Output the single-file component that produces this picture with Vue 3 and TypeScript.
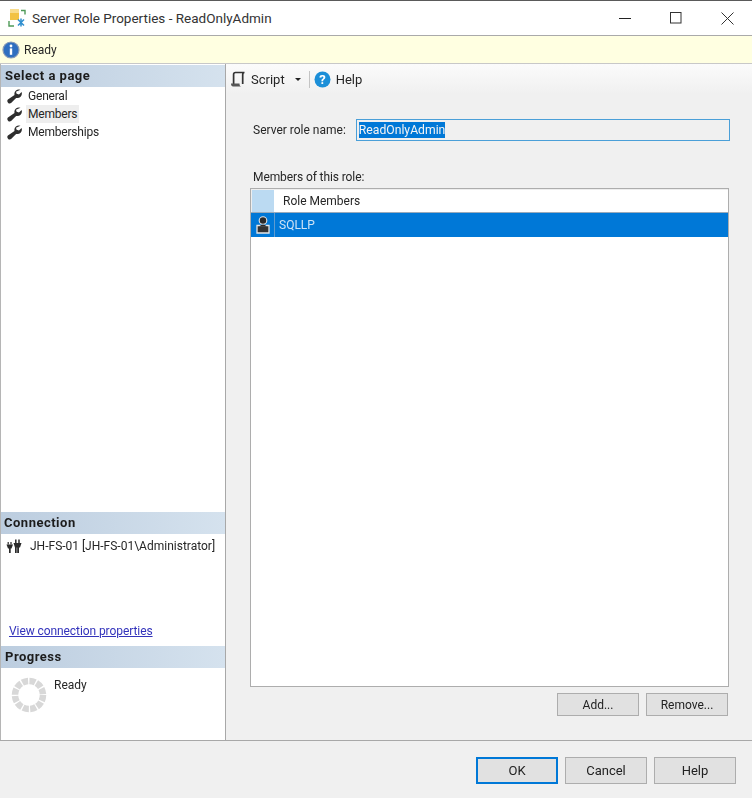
<script setup lang="ts">
const pages: { name: string; active: boolean }[] = [
  { name: 'General', active: false },
  { name: 'Members', active: true },
  { name: 'Memberships', active: false },
]
const wrench =
  'M13.5.8a4.5 4.5 0 0 0-6 5.2L.9 10.6a2.4 2.4 0 0 0 3.2 3.5l5-5.2a4.5 4.5 0 0 0 5.500-5.800l-2.600 2.300-2.400-.6-.6-2z'
</script>

<template>
  <div class="dialog">
    <header class="titlebar">
      <svg class="app-icon" width="20" height="20" viewBox="0 0 20 20">
        <rect x="2" y="1" width="9" height="11" fill="#f2c243" />
        <rect x="2" y="1" width="9" height="4" fill="#f8dc8c" />
        <path d="M1 13v5h5" fill="none" stroke="#4e9a57" stroke-width="1.4" />
        <path d="M13 2.5h4v4" fill="none" stroke="#4e9a57" stroke-width="1.4" />
        <path d="M10 11.5l6 6M16 11.5l-6 6M13 10.5v8" stroke="#2f8fcf" stroke-width="1.5" />
      </svg>
      <span class="title">Server Role Properties - ReadOnlyAdmin</span>
      <div class="window-buttons">
        <svg width="12" height="12" viewBox="0 0 12 12"><path d="M0 6.5h12" stroke="#222" stroke-width="1" /></svg>
        <svg width="12" height="12" viewBox="0 0 12 12"><rect x=".5" y=".5" width="10.5" height="10.5" fill="none" stroke="#333" stroke-width="1" /></svg>
        <svg width="13" height="13" viewBox="0 0 13 13"><path d="M.5.5l12 12M12.5.5l-12 12" stroke="#333" stroke-width="1" /></svg>
      </div>
    </header>

    <div class="status">
      <svg width="18" height="18" viewBox="0 0 18 18">
        <circle cx="9" cy="9" r="8" fill="#2f6fc0" stroke="#8a9bb5" stroke-width="1.2" />
        <circle cx="9" cy="5" r="1.4" fill="#fff" />
        <rect x="7.8" y="7.4" width="2.4" height="6.4" fill="#fff" />
      </svg>
      <span>Ready</span>
    </div>

    <div class="body">
      <aside class="sidebar">
        <section class="pages">
          <h2 class="band">Select a page</h2>
          <ul class="page-list">
            <li v-for="p in pages" :key="p.name" class="page">
              <svg width="15" height="15" viewBox="0 0 15 15"><path :d="wrench" fill="#2e2e2e" /></svg>
              <span :class="{ active: p.active }">{{ p.name }}</span>
            </li>
          </ul>
        </section>

        <section class="connection">
          <h2 class="band conn-band">Connection</h2>
          <div class="conn-row">
            <svg width="16" height="14" viewBox="0 0 16 14">
              <path d="M0.5 5.5h6.5L5.5 9.5H4.7V14H3V9.5H2z" fill="#2b2b2b" />
              <path d="M7.5 4h8L14 8.5h-1V14h-1.8V8.5h-.5V14H9V8.5H9z" fill="#2b2b2b" />
              <path d="M9.8 .5v3.5M13 .5v3.5" stroke="#2b2b2b" stroke-width="1.5" />
              <path d="M2.2 3v2.5M5 3v2.5" stroke="#2b2b2b" stroke-width="1.2" />
            </svg>
            <span>JH-FS-01 [JH-FS-01\Administrator]</span>
          </div>
          <a class="conn-link">View connection properties</a>
        </section>

        <section class="progress">
          <h2 class="band">Progress</h2>
          <div class="progress-row">
            <svg class="spinner" width="36" height="36" viewBox="0 0 36 36">
              <circle cx="18" cy="18" r="14" fill="none" stroke="#d8d8d8" stroke-width="6.5" stroke-dasharray="6 1.33" />
            </svg>
            <span>Ready</span>
          </div>
        </section>
      </aside>

      <main class="content">
        <div class="toolbar">
          <svg class="script-icon" width="16" height="17" viewBox="0 0 16 17">
            <path d="M5.5 1.5h9M5.5 1.5C4 1.5 3.6 2.5 3.6 3.5v9.5M14.500 1.500c-1.300 0-1.800.8-1.800 2.200V13" fill="none" stroke="#333" stroke-width="1.7" />
            <path d="M1 12.500h8.500c0 1.800.6 3 1.800 3H3.200C1.700 15.500 1 14.300 1 12.500z" fill="#555" />
          </svg>
          <span class="tool-label">Script</span>
          <span class="caret"></span>
          <span class="tool-sep"></span>
          <svg class="help-icon" width="17" height="17" viewBox="0 0 17 17">
            <circle cx="8.5" cy="8.5" r="8" fill="#1c8fd8" />
            <text x="8.5" y="13" text-anchor="middle" class="help-q">?</text>
          </svg>
          <span class="tool-label">Help</span>
        </div>

        <div class="form">
          <div class="name-row">
            <label>Server role name:</label>
            <div class="name-box"><span class="selected">ReadOnlyAdmin</span></div>
          </div>

          <div class="members-label">Members of this role:</div>
          <div class="grid">
            <div class="grid-head">
              <div class="corner"></div>
              <div class="head-cell">Role Members</div>
            </div>
            <div class="grid-row">
              <div class="row-icon">
                <svg width="16" height="20" viewBox="0 0 16 20">
                  <path d="M2 10.500h12v7.500H2z" fill="#333" stroke="#e6e6e6" stroke-width="1.300" />
                  <circle cx="8" cy="5.500" r="3.800" fill="#2a2a2a" stroke="#e6e6e6" stroke-width="1.100" />
                  <path d="M4.500 11.500c.8-2.200 6.200-2.200 7 0z" fill="#2a2a2a" />
                </svg>
              </div>
              <div class="row-name">SQLLP</div>
            </div>
          </div>

          <div class="grid-actions">
            <button class="btn small">Add...</button>
            <button class="btn small">Remove...</button>
          </div>
        </div>
      </main>
    </div>

    <footer class="footer">
      <button class="btn large primary">OK</button>
      <button class="btn large">Cancel</button>
      <button class="btn large">Help</button>
    </footer>
  </div>
</template>

<style>
html, body { margin: 0; background: #fff; }
</style>

<style scoped>
.dialog {
  width: 752px;
  height: 798px;
  box-sizing: border-box;
  display: flex;
  flex-direction: column;
  overflow: hidden;
  border-top: 1px solid #5a5a5a;
  font-family: Roboto, "Noto Sans", sans-serif;
  font-size: 12px;
  color: #262626;
  filter: blur(0.4px);
}
.titlebar {
  height: 35px;
  flex: none;
  box-sizing: border-box;
  background: #fff;
  border-bottom: 1px solid #aaa;
  display: flex;
  align-items: center;
  padding-left: 8px;
}
.app-icon { margin-right: 4px; }
.title { font-size: 13.5px; color: #333; }
.window-buttons {
  margin-left: auto;
  display: flex;
  align-items: center;
  gap: 39px;
  padding-right: 18px;
}
.status {
  height: 28px;
  flex: none;
  box-sizing: border-box;
  background: #ffffe1;
  border-bottom: 1px solid #c8c8c8;
  display: flex;
  align-items: center;
  gap: 4px;
  padding-left: 2px;
}
.body { flex: 1; min-height: 0; display: flex; }
.sidebar {
  width: 226px;
  flex: none;
  box-sizing: border-box;
  padding-top: 1px;
  background: #fff;
  border-left: 1px solid #b5b5b5;
  border-right: 1px solid #a8a8a8;
  display: flex;
  flex-direction: column;
}
.band {
  margin: 0;
  height: 22px;
  line-height: 21px;
  padding-left: 4px;
  font-size: 13px;
  letter-spacing: 0.5px;
  font-weight: 700;
  color: #1c1c1c;
  background: linear-gradient(90deg, #bccddf, #d5e2ee);
}
.conn-band { padding-left: 3px; }
.pages { flex: 1; }
.page-list { list-style: none; margin: 0; padding: 0; }
.page {
  height: 18px;
  display: flex;
  align-items: center;
  padding-left: 6px;
  gap: 4px;
}
.page span { padding: 0 2px; line-height: 18px; letter-spacing: -0.2px; }
.page .active { background: #eeeeee; }
.connection { height: 134px; flex: none; display: flex; flex-direction: column; }
.conn-row {
  display: flex;
  align-items: center;
  gap: 8px;
  padding: 2px 0 0 5px;
  height: 20px;
}
.conn-link {
  margin-top: auto;
  margin-bottom: 8px;
  padding-left: 8px;
  letter-spacing: -0.08px;
  color: #3333bb;
  text-decoration: underline;
}
.progress { height: 94px; flex: none; }
.progress-row {
  display: flex;
  align-items: flex-start;
  gap: 7px;
  padding: 9px 0 0 10px;
}
.progress-row span { margin-top: 1px; }
.content { flex: 1; min-width: 0; background: #f0f0f0; display: flex; flex-direction: column; }
.toolbar {
  height: 30px;
  flex: none;
  display: flex;
  align-items: center;
  padding-left: 4px;
  gap: 4px;
  font-size: 13px;
  background: linear-gradient(#fbfbfb, #f0f0f0);
}
.script-icon { margin-right: 1px; }
.help-icon { margin-right: 1px; }
.tool-label { color: #262626; }
.caret {
  margin-left: 6px;
  border: 3px solid transparent;
  border-top: 3px solid #222;
  border-bottom: 0;
}
.tool-sep { width: 1px; height: 17px; background: #c4c4c4; margin: 0 0 0 4px; }
.help-q { font-size: 13px; font-weight: 700; fill: #fff; font-family: Roboto, sans-serif; }
.form { flex: 1; min-height: 0; padding: 25px 22px 0 24px; display: flex; flex-direction: column; }
.name-row { display: flex; align-items: center; gap: 10px; padding-left: 3px; }
.name-box {
  flex: 1;
  height: 22px;
  box-sizing: border-box;
  border: 1px solid #4a9fd8;
  background: #f0f0f0;
  padding: 2px 2px;
  line-height: 16px;
  font-size: 12.2px;
}
.selected { background: #0078d7; color: #f4f4f4; padding: 1px 0; }
.members-label { margin-top: 29px; margin-bottom: 4px; padding-left: 3px; letter-spacing: -0.1px; }
.grid {
  flex: none;
  width: 479px;
  height: 499px;
  box-sizing: border-box;
  border: 1px solid #adadad;
  background: #fff;
}
.grid-head { height: 23px; box-sizing: border-box; display: flex; border-top: 1px solid #eee; border-left: 1px solid #eee; }
.corner { width: 22px; background: #bbdaf2; }
.head-cell { padding-left: 9px; line-height: 22px; }
.grid-row {
  height: 25px;
  background: #0078d7;
  display: flex;
  color: #cfe3f5;
  border-top: 1px solid #9ab;
  box-sizing: border-box;
}
.row-icon {
  width: 24px;
  box-sizing: border-box;
  border-right: 1px solid #5d9bd0;
  display: flex;
  align-items: center;
  justify-content: center;
}
.row-name { padding-left: 4px; line-height: 24px; }
.grid-actions {
  display: flex;
  justify-content: flex-end;
  gap: 7px;
  width: 478px;
  margin-top: 6px;
}
.btn {
  box-sizing: border-box;
  font: inherit;
  color: #222;
  background: #e1e1e1;
  border: 1px solid #adadad;
  padding: 0;
}
.btn.small { width: 82px; height: 23px; }
.btn.large { width: 82px; height: 27px; font-size: 13px; }
.btn.primary { border: 2px solid #0078d7; }
.footer {
  height: 58px;
  flex: none;
  box-sizing: border-box;
  background: #f0f0f0;
  border-top: 1px solid #a8a8a8;
  display: flex;
  justify-content: flex-end;
  gap: 7px;
  padding: 16px 16px 0 0;
}
</style>
